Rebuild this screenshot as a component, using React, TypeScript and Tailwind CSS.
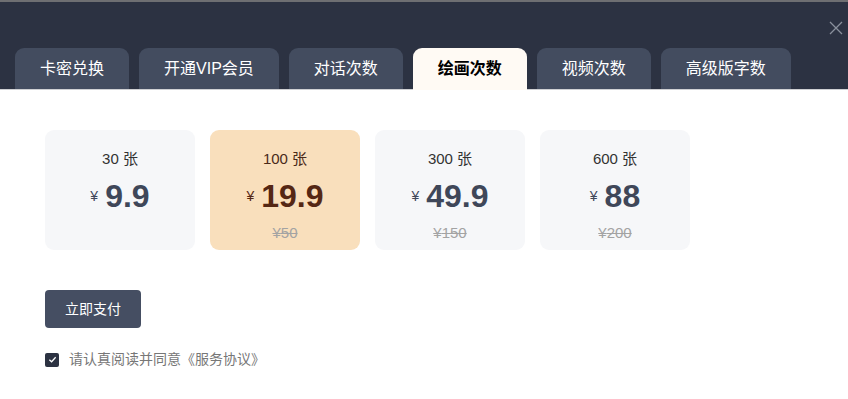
import { useState } from "react";

type Plan = {
  amount: string;
  price: string;
  original?: string;
};

const tabs = ["卡密兑换", "开通VIP会员", "对话次数", "绘画次数", "视频次数", "高级版字数"];

const plans: Plan[] = [
  { amount: "30", price: "9.9" },
  { amount: "100", price: "19.9", original: "50" },
  { amount: "300", price: "49.9", original: "150" },
  { amount: "600", price: "88", original: "200" },
];

export default function App() {
  const [activeTab, setActiveTab] = useState(3);
  const [selected, setSelected] = useState(1);
  const [agreed, setAgreed] = useState(true);

  return (
    <div
      className="h-[399px] w-[848px] overflow-hidden bg-white"
      style={{ fontFamily: '"Liberation Sans", Arial, "Noto Sans CJK SC", sans-serif' }}
    >
      <div className="h-[2px] bg-[#6e6f72]" />
      <div className="relative h-[88px] border-b border-[#cfd0d3] bg-[#2c3242]">
        <button className="absolute right-[4px] top-[17px] flex h-[17px] w-[17px] items-center justify-center text-[#8a909c]">
          <svg width="14" height="14" viewBox="0 0 14 14" fill="none" stroke="currentColor" strokeWidth="1.3">
            <path d="M1 1L13 13M13 1L1 13" />
          </svg>
        </button>
        <div className="flex h-full items-end gap-[10px] pl-[15px]">
          {tabs.map((t, i) => (
            <button
              key={t}
              onClick={() => setActiveTab(i)}
              className={`h-[41px] rounded-t-[9px] px-[25px] text-[16px] ${
                activeTab === i
                  ? "-mb-px h-[42px] bg-[#fffaf4] font-semibold text-black"
                  : "bg-[#434c5f] text-white"
              }`}
            >
              {t}
            </button>
          ))}
        </div>
      </div>

      <div className="px-[45px] pt-[40px]">
        <div className="flex gap-[15px]">
          {plans.map((p, i) => (
            <button
              key={p.amount}
              onClick={() => setSelected(i)}
              className={`flex h-[120px] w-[150px] flex-col items-center rounded-[9px] pt-[19px] ${
                selected === i ? "bg-[#f9dfbc]" : "bg-[#f6f7f9]"
              }`}
            >
              <div className={`text-[15px] leading-[20px] ${selected === i ? "text-[#4a2a1a]" : "text-[#333]"}`}>
                {p.amount} 张
              </div>
              <div
                className={`mt-[7px] flex items-center leading-[40px] ${
                  selected === i ? "text-[#552714]" : "text-[#3f4759]"
                }`}
              >
                <span className="mr-[7px] text-[14px] font-normal">¥</span>
                <span className="text-[32px] font-bold">{p.price}</span>
              </div>
              {p.original && (
                <div className="mt-[7px] text-[15px] leading-[20px] text-[#a3a3a3] line-through">
                  ¥{p.original}
                </div>
              )}
            </button>
          ))}
        </div>

        <button className="mt-[40px] h-[38px] w-[96px] rounded-[4px] bg-[#454e62] text-[14px] text-white">
          立即支付
        </button>

        <label className="mt-[21px] flex items-center gap-[10px] text-[14px] text-[#777]">
          <span
            onClick={() => setAgreed(!agreed)}
            className={`flex h-[14px] w-[14px] items-center justify-center rounded-[2px] ${
              agreed ? "bg-[#2c3242]" : "border border-[#ccc] bg-white"
            }`}
          >
            {agreed && (
              <svg width="9" height="9" viewBox="0 0 10 10" fill="none" stroke="white" strokeWidth="1.4">
                <path d="M1.5 5.2L4 7.5L8.5 2.5" />
              </svg>
            )}
          </span>
          请认真阅读并同意《服务协议》
        </label>
      </div>
    </div>
  );
}
